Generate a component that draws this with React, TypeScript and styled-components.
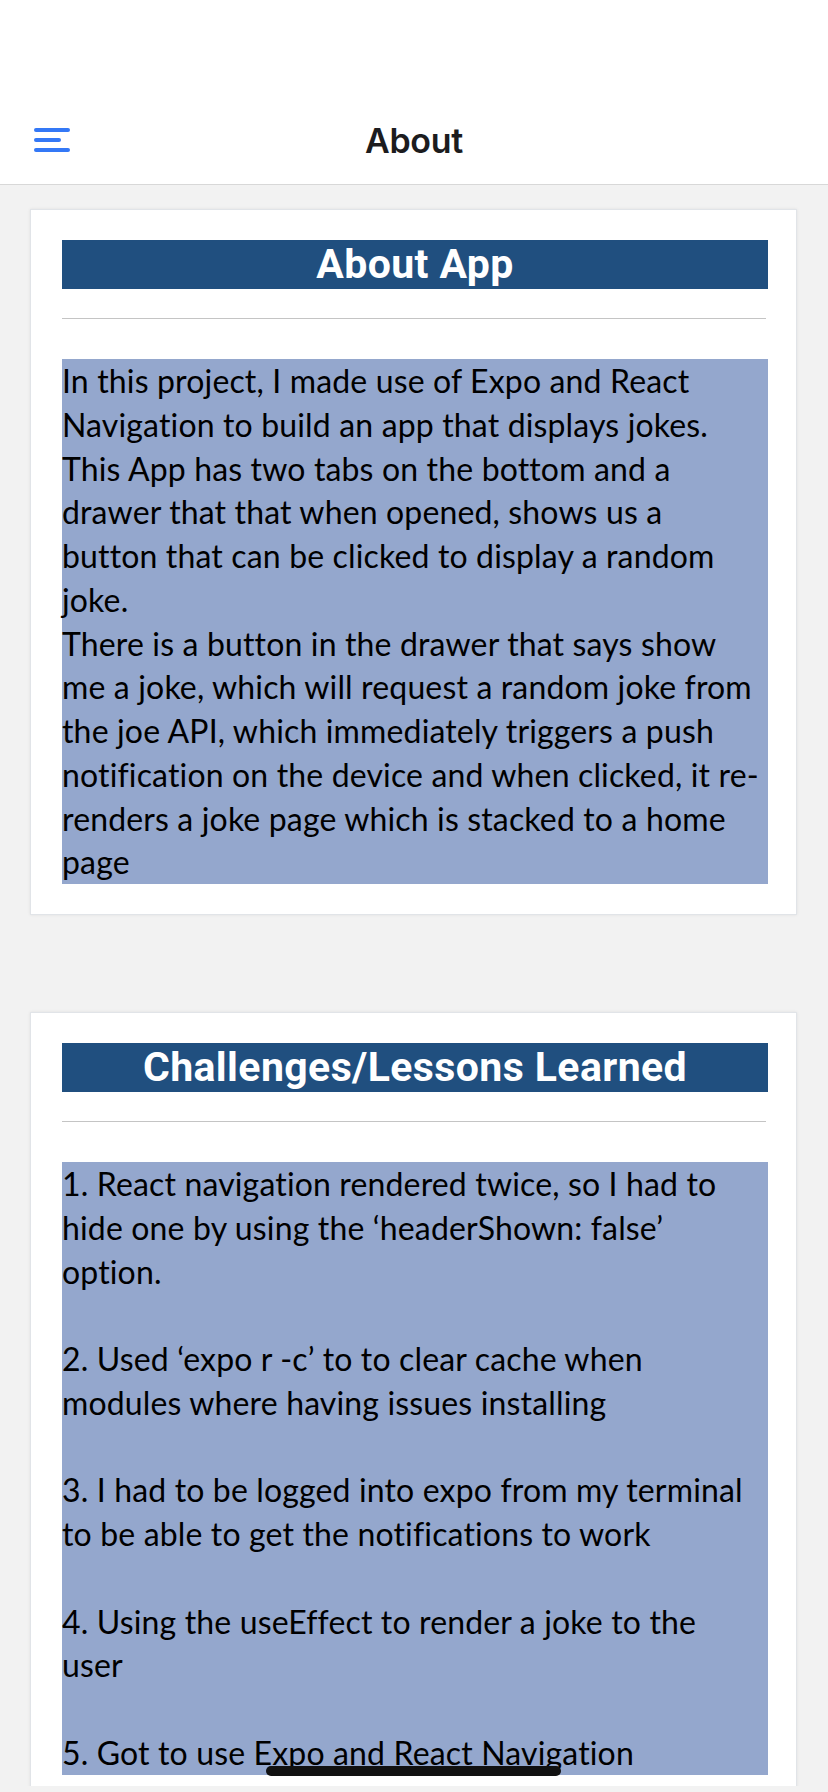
import React from "react";
import styled, { createGlobalStyle } from "styled-components";

const GlobalStyle = createGlobalStyle`
  html, body { margin: 0; padding: 0; background: #f2f2f2; }
  * { box-sizing: border-box; }
`;

const Screen = styled.div`
  position: relative;
  width: 828px;
  height: 1792px;
  display: flex;
  flex-direction: column;
  background: #f2f2f2;
  padding-bottom: 6px;
  overflow: hidden;
`;

const Header = styled.header`
  flex: 0 0 auto;
  height: 185px;
  padding-top: 96px;
  background: #ffffff;
  border-bottom: 1px solid #d8d8d8;
`;

const NavBar = styled.div`
  position: relative;
  height: 88px;
  display: flex;
  align-items: center;
  justify-content: center;
`;

const MenuButton = styled.button`
  position: absolute;
  left: 34px;
  top: 32px;
  width: 36px;
  height: 24px;
  padding: 0;
  border: 0;
  background: transparent;
  display: flex;
  flex-direction: column;
  justify-content: space-between;
  align-items: flex-start;
`;

const MenuLine = styled.span<{ $w: number }>`
  display: block;
  width: ${(p) => p.$w}px;
  height: 4px;
  border-radius: 2px;
  background: #3478f6;
`;

const NavTitle = styled.h1`
  margin: 0;
  font-family: Inter, "Liberation Sans", sans-serif;
  font-weight: 600;
  font-size: 34px;
  letter-spacing: -0.3px;
  color: #1c1c1e;
`;

const ScrollArea = styled.main`
  flex: 1 1 auto;
  overflow: hidden;
  padding-top: 24px;
  display: flex;
  flex-direction: column;
  gap: 97px;
`;

const Card = styled.section`
  flex: 0 0 auto;
  margin: 0 31px 0 30px;
  padding: 30px 28px 30px 31px;
  background: #ffffff;
  border: 1px solid #e1e4e8;
  box-shadow: 0 0 3px rgba(0, 0, 0, 0.08);
`;

const TitleBar = styled.h2`
  margin: 0;
  height: 49px;
  background: #204f7f;
  color: #ffffff;
  text-align: center;
  font-family: Roboto, "Liberation Sans", sans-serif;
  font-weight: 700;
  font-size: 41px;
  letter-spacing: 0.4px;
  line-height: 49px;
`;

const Divider = styled.hr`
  margin: 29px 2px 40px 0;
  border: 0;
  height: 1px;
  background: #c4c4c4;
`;

const Body = styled.p`
  margin: 0;
  background: #94a7cd;
  color: #000000;
  font-family: Lato, "Open Sans", sans-serif;
  font-size: 32px;
  letter-spacing: 0.15px;
  line-height: 43.75px;
  white-space: pre;
`;

const HomeIndicator = styled.div`
  position: absolute;
  left: 266px;
  top: 1766px;
  width: 295px;
  height: 10px;
  border-radius: 5px;
  background: #111111;
`;

const aboutText = [
  "In this project, I made use of Expo and React",
  "Navigation to build an app that displays jokes.",
  "This App has two tabs on the bottom and a",
  "drawer that that when opened, shows us a",
  "button that can be clicked to display a random",
  "joke.",
  "There is a button in the drawer that says show",
  "me a joke, which will request a random joke from",
  "the joe API, which immediately triggers a push",
  "notification on the device and when clicked, it re-",
  "renders a joke page which is stacked to a home",
  "page",
].join("\n");

const lessonsText = [
  "1. React navigation rendered twice, so I had to",
  "hide one by using the \u2018headerShown: false\u2019",
  "option.",
  "",
  "2. Used \u2018expo r -c\u2019 to to clear cache when",
  "modules where having issues installing",
  "",
  "3. I had to be logged into expo from my terminal",
  "to be able to get the notifications to work",
  "",
  "4. Using the useEffect to render a joke to the",
  "user",
  "",
  "5. Got to use Expo and React Navigation",
].join("\n");

export default function App() {
  return (
    <>
      <GlobalStyle />
      <Screen>
        <Header>
          <NavBar>
            <MenuButton aria-label="Open menu">
              <MenuLine $w={36} />
              <MenuLine $w={27} />
              <MenuLine $w={36} />
            </MenuButton>
            <NavTitle>About</NavTitle>
          </NavBar>
        </Header>
        <ScrollArea>
          <Card>
            <TitleBar>About App</TitleBar>
            <Divider />
            <Body>{aboutText}</Body>
          </Card>
          <Card>
            <TitleBar>Challenges/Lessons Learned</TitleBar>
            <Divider />
            <Body>{lessonsText}</Body>
          </Card>
        </ScrollArea>
        <HomeIndicator />
      </Screen>
    </>
  );
}
